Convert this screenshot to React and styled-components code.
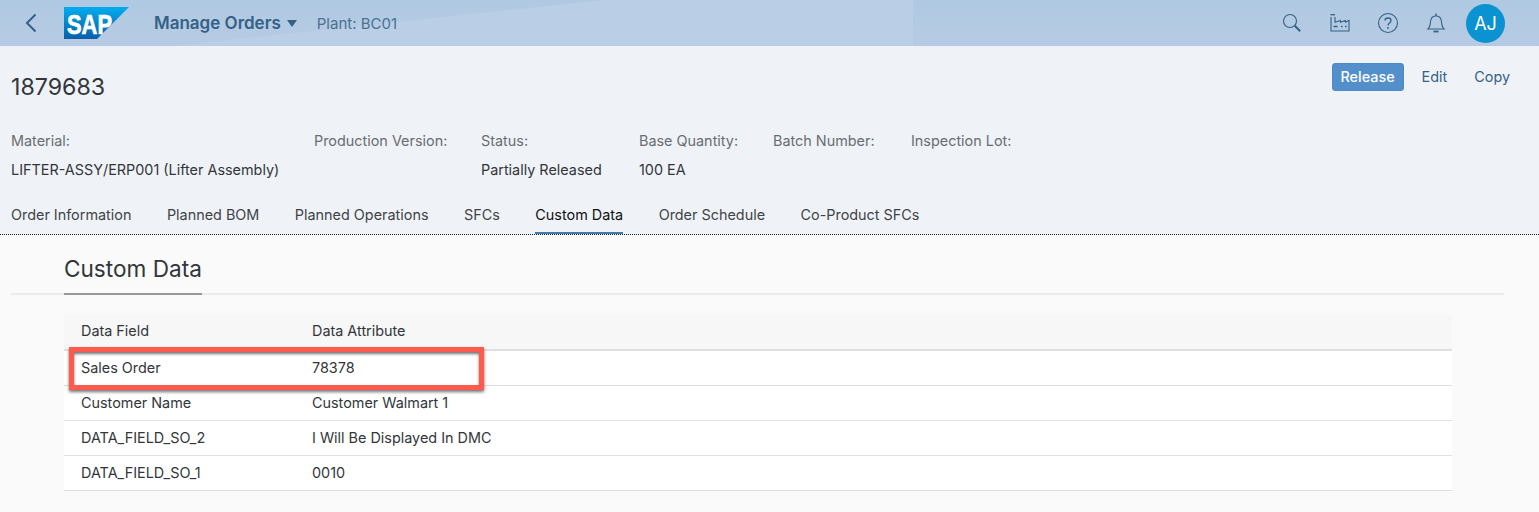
import React from "react";
import styled, { createGlobalStyle } from "styled-components";

const FONT = `Inter, "Open Sans", sans-serif`;

const Global = createGlobalStyle`
  html, body { margin: 0; padding: 0; background: #fafafa; }
  body { font-family: ${FONT}; color: #32363a; overflow: hidden; }
`;

const Page = styled.div`
  width: 1539px;
  height: 512px;
  position: relative;
  background: #fafafa;
  overflow: hidden;
`;

const ShellBar = styled.header`
  height: 46px;
  display: flex;
  align-items: center;
  padding: 0 34px 0 24px;
  background:
    linear-gradient(173.9deg, transparent 44.7%, #bacfe5 45.2%) 0 0 / 913px 46px no-repeat,
    linear-gradient(180deg, #b0c9e2, #b6cbe3);
`;

const BackButton = styled.button`
  width: 16px;
  height: 24px;
  padding: 0;
  border: 0;
  background: none;
  color: #346187;
  display: flex;
  align-items: center;
  margin-right: 24px;
`;

const Logo = styled.svg`
  width: 66px;
  height: 33px;
  margin-right: 24px;
  flex: none;
`;

const LogoText = styled.text`
  font-family: "Liberation Sans", sans-serif;
  font-weight: 700;
  font-size: 28px;
  fill: #fff;
  stroke: #fff;
  stroke-width: 0.7px;
`;

const AppTitle = styled.div`
  font-size: 17px;
  font-weight: 600;
  color: #346187;
  display: flex;
  align-items: center;
  gap: 6px;
  margin-right: 20px;
  white-space: nowrap;
`;

const Caret = styled.span`
  width: 0;
  height: 0;
  border-left: 5.5px solid transparent;
  border-right: 5.5px solid transparent;
  border-top: 7px solid #346187;
`;

const Plant = styled.div`
  font-size: 15px;
  color: #4c7193;
  white-space: nowrap;
`;

const ShellActions = styled.div`
  margin-left: auto;
  display: flex;
  align-items: center;
  gap: 24px;
  color: #346187;
`;

const IconSlot = styled.span`
  width: 24px;
  height: 24px;
  display: flex;
  align-items: center;
  justify-content: center;
`;

const Avatar = styled.div`
  width: 39px;
  height: 39px;
  border-radius: 50%;
  background: #0a92d1;
  color: #fff;
  font-size: 18px;
  display: flex;
  align-items: center;
  justify-content: center;
  margin-left: -6px;
`;

const ObjectHeader = styled.section`
  height: 189px;
  background: #eff3f8;
  box-sizing: border-box;
  padding: 17px 29px 0 11px;
  border-bottom: 1px dotted #222;
  display: flex;
  flex-direction: column;
`;

const TitleRow = styled.div`
  display: flex;
  justify-content: space-between;
  align-items: flex-start;
`;

const OrderNumber = styled.h1`
  margin: 9px 0 0;
  font-size: 23.2px;
  font-weight: 400;
  line-height: 30px;
  color: #32363a;
`;

const Actions = styled.div`
  display: flex;
  align-items: center;
  gap: 18px;
`;

const PrimaryButton = styled.button`
  height: 28px;
  width: 72px;
  border: 1px solid #4a8bc8;
  border-radius: 3px;
  background: #528fcb;
  color: #fff;
  font: 500 14.4px ${FONT};
  padding: 0 0 2px;
`;

const GhostButton = styled.button`
  border: 0;
  background: none;
  padding: 0 0 2px;
  color: #346187;
  font: 400 14.4px ${FONT};
  margin-left: ${(p) => p.$ml || 0}px;
`;

const Attributes = styled.div`
  display: flex;
  margin-top: 29px;
`;

const Attribute = styled.div`
  width: ${(p) => p.$w}px;
  display: flex;
  flex-direction: column;
  gap: 9px;
  font-size: 14.4px;
  line-height: 20px;
  white-space: nowrap;
`;

const AttrLabel = styled.div`
  color: #6a6d70;
`;

const AttrValue = styled.div`
  color: #32363a;
`;

const Tabs = styled.nav`
  display: flex;
  gap: 35.5px;
  margin-top: auto;
`;

const Tab = styled.div`
  height: 35px;
  box-sizing: border-box;
  padding-top: 6px;
  font-size: 14.4px;
  line-height: 20px;
  white-space: nowrap;
  color: ${(p) => (p.$active ? "#111" : "#3f4347")};
  border-bottom: 2px solid ${(p) => (p.$active ? "#427cac" : "transparent")};
`;

const Section = styled.section`
  padding: 0 35px 0 11px;
`;

const SectionHead = styled.div`
  height: 60px;
  box-sizing: border-box;
  border-bottom: 2px solid #ececec;
  padding-left: 53px;
  display: flex;
`;

const SectionTitle = styled.h2`
  margin: 0 0 -2px;
  padding-top: 19px;
  box-sizing: border-box;
  font-size: 22.6px;
  line-height: 30px;
  font-weight: 400;
  color: #32363a;
  border-bottom: 2px solid #999;
  height: 60px;
`;

const DataTable = styled.table`
  margin: 19px 0 0 53px;
  width: 1388px;
  border-collapse: collapse;
  font-size: 14.4px;
  color: #32363a;
  table-layout: fixed;
`;

const Th = styled.th`
  height: 36px;
  box-sizing: border-box;
  padding: 0 0 2px ${(p) => p.$pl}px;
  width: ${(p) => p.$w || "auto"};
  text-align: left;
  font-weight: 400;
  background: #f7f7f7;
  border-bottom: 2px solid #e0e0e0;
`;

const Td = styled.td`
  height: 34px;
  box-sizing: content-box;
  padding: 0 0 0 ${(p) => p.$pl}px;
  background: #fff;
  border-bottom: 1px solid #e0e0e0;
  line-height: 34px;
  vertical-align: top;
`;

const Highlight = styled.div`
  position: absolute;
  left: 69px;
  top: 347px;
  width: 415px;
  height: 43px;
  box-sizing: border-box;
  border: 5px solid #fe5a4e;
  box-shadow: 0 2px 3px rgba(0,0,0,.55), inset 0 2px 3px rgba(0,0,0,.55);
`;

const rows = [
  ["Sales Order", "78378"],
  ["Customer Name", "Customer Walmart 1"],
  ["DATA_FIELD_SO_2", "I Will Be Displayed In DMC"],
  ["DATA_FIELD_SO_1", "0010"],
];

const tabs = ["Order Information", "Planned BOM", "Planned Operations", "SFCs", "Custom Data", "Order Schedule", "Co-Product SFCs"];

const attrs = [
  ["Material:", "LIFTER-ASSY/ERP001 (Lifter Assembly)", 303],
  ["Production Version:", "", 167],
  ["Status:", "Partially Released", 158],
  ["Base Quantity:", "100 EA", 134],
  ["Batch Number:", "", 138],
  ["Inspection Lot:", "", 120],
];

export default function App() {
  return (
    <Page>
      <Global />
      <ShellBar>
        <BackButton aria-label="Back">
          <svg width="14" height="20" viewBox="0 0 14 20" fill="none" stroke="currentColor" strokeWidth="2">
            <path d="M11.500 1.500 3 10l8.500 8.500" />
          </svg>
        </BackButton>
        <Logo viewBox="0 0 66 33" aria-label="SAP">
          <defs>
            <linearGradient id="sap" x1="0" y1="0" x2="0" y2="1">
              <stop offset="0" stopColor="#00adef" />
              <stop offset="1" stopColor="#0a5ea8" />
            </linearGradient>
          </defs>
          <path d="M0 0h65L33 32H0z" fill="url(#sap)" />
          <LogoText x="3" y="26.500" textLength="45" lengthAdjust="spacingAndGlyphs">SAP</LogoText>
        </Logo>
        <AppTitle>
          Manage Orders <Caret />
        </AppTitle>
        <Plant>Plant: BC01</Plant>
        <ShellActions>
          <IconSlot>
            <svg width="20" height="20" viewBox="0 0 20 20" fill="none" stroke="currentColor" strokeWidth="1.1">
              <circle cx="8" cy="8" r="6.500" />
              <path d="m12.800 12.800 5.400 5.400" strokeWidth="2" />
            </svg>
          </IconSlot>
          <IconSlot>
            <svg width="20" height="18" viewBox="0 0 20 18" fill="none" stroke="currentColor" strokeWidth="1.1">
              <path d="M.5.700h4.500" strokeWidth="1.300" />
              <path d="M1 3v14h18V6.500l-3.500 1.700V6.500l-5 1.700V6.500L5 8.200V3" />
              <path d="M3.500 12.500h4M11 12.500h1.500M15 12.500h1.500" strokeWidth="1.600" />
            </svg>
          </IconSlot>
          <IconSlot>
            <svg width="22" height="22" viewBox="0 0 22 22" fill="none" stroke="currentColor" strokeWidth="1.1">
              <circle cx="11" cy="11" r="9.500" />
              <path d="M8 8.600C8 6.800 9.300 6 11 6s3 1 3 2.500c0 2.400-3 2.400-3 5" strokeWidth="1.300" />
              <circle cx="11" cy="16" r=".9" fill="currentColor" stroke="none" />
            </svg>
          </IconSlot>
          <IconSlot>
            <svg width="20" height="22" viewBox="0 0 20 22" fill="none" stroke="currentColor" strokeWidth="1.1">
              <path d="M2 17h16c-2.500-2-2.200-5-2.600-8C15 5.800 13 4 10 4S5 5.800 4.600 9C4.200 12 4.500 15 2 17z" />
              <path d="M10 1.500V4" strokeWidth="1.400" />
              <path d="M7.500 19.500h5" strokeWidth="1.800" />
            </svg>
          </IconSlot>
          <Avatar>AJ</Avatar>
        </ShellActions>
      </ShellBar>

      <ObjectHeader>
        <TitleRow>
          <OrderNumber>1879683</OrderNumber>
          <Actions>
            <PrimaryButton>Release</PrimaryButton>
            <GhostButton>Edit</GhostButton>
            <GhostButton $ml={9}>Copy</GhostButton>
          </Actions>
        </TitleRow>
        <Attributes>
          {attrs.map(([label, value, w]) => (
            <Attribute key={label} $w={w}>
              <AttrLabel>{label}</AttrLabel>
              <AttrValue>{value}</AttrValue>
            </Attribute>
          ))}
        </Attributes>
        <Tabs>
          {tabs.map((t) => (
            <Tab key={t} $active={t === "Custom Data"}>{t}</Tab>
          ))}
        </Tabs>
      </ObjectHeader>

      <Section>
        <SectionHead>
          <SectionTitle>Custom Data</SectionTitle>
        </SectionHead>
        <DataTable>
          <thead>
            <tr>
              <Th $pl={17} $w="248px">Data Field</Th>
              <Th $pl={0}>Data Attribute</Th>
            </tr>
          </thead>
          <tbody>
            {rows.map(([a, b]) => (
              <tr key={a}>
                <Td $pl={17}>{a}</Td>
                <Td $pl={0}>{b}</Td>
              </tr>
            ))}
          </tbody>
        </DataTable>
      </Section>
      <Highlight />
    </Page>
  );
}
